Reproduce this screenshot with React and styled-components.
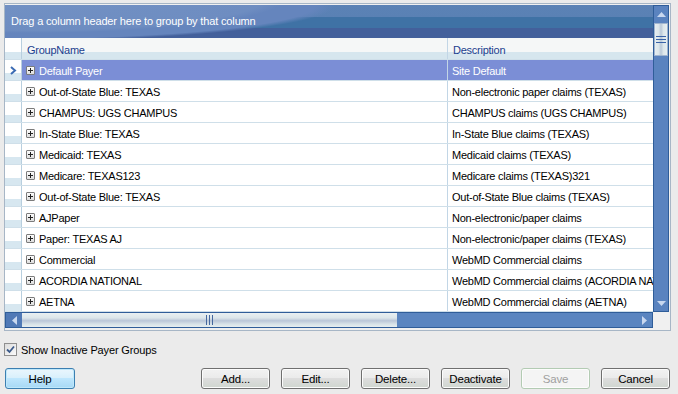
import React from 'react';
import styled, { createGlobalStyle } from 'styled-components';

const GlobalStyle = createGlobalStyle`
  html, body {
    margin: 0;
    padding: 0;
    background: #ebebeb;
  }
  body {
    font-family: "Liberation Sans", Arial, sans-serif;
    font-size: 11px;
  }
`;

const payers = [
  ['Default Payer', 'Site Default'],
  ['Out-of-State Blue: TEXAS', 'Non-electronic paper claims (TEXAS)'],
  ['CHAMPUS: UGS CHAMPUS', 'CHAMPUS claims (UGS CHAMPUS)'],
  ['In-State Blue: TEXAS', 'In-State Blue claims (TEXAS)'],
  ['Medicaid: TEXAS', 'Medicaid claims (TEXAS)'],
  ['Medicare: TEXAS123', 'Medicare claims (TEXAS)321'],
  ['Out-of-State Blue: TEXAS', 'Out-of-State Blue claims (TEXAS)'],
  ['AJPaper', 'Non-electronic/paper claims'],
  ['Paper: TEXAS AJ', 'Non-electronic/paper claims (TEXAS)'],
  ['Commercial', 'WebMD Commercial claims'],
  ['ACORDIA NATIONAL', 'WebMD Commercial claims (ACORDIA NATIONAL)'],
  ['AETNA', 'WebMD Commercial claims (AETNA)'],
];

const Page = styled.div`
  width: 678px;
  height: 394px;
  padding: 3px 7px 0 4px;
  box-sizing: border-box;
  display: flex;
  flex-direction: column;
`;

const GridBox = styled.div`
  border: 1px solid #a7b6c6;
  background: #f0f0f0;
  height: 328px;
  box-sizing: border-box;
  padding: 1px 1px 2px 0;
  display: flex;
  flex-direction: column;
`;

const Upper = styled.div`
  display: flex;
  height: 307px;
`;

const Main = styled.div`
  width: 648px;
  display: flex;
  flex-direction: column;
  background: #fff;
  overflow: hidden;
  letter-spacing: -0.25px;
`;

const GroupPanel = styled.div`
  height: 33px;
  box-sizing: border-box;
  padding: 10px 0 0 6px;
  color: #fff;
  font-size: 11px;
  letter-spacing: -0.15px;
  background:
    radial-gradient(ellipse 260px 34px at 20px -6px, #7291c4 0%, #6e8dc1 92%, rgba(110,141,193,0) 100%),
    radial-gradient(ellipse 330px 36px at 0px 0px, #6585bd 0%, #6585bd 94%, rgba(101,133,189,0) 100%),
    linear-gradient(to bottom, #5b82b5 0, #5a81b4 12px, #3f72a5 12px, #3f72a5 23px, #43609b 23px, #43609b 33px);
`;

const Row = styled.div`
  display: grid;
  grid-template-columns: 17px 426px 1fr;
  height: ${p => (p.$header ? 22 : 21)}px;
  box-sizing: border-box;
  border-bottom: 1px solid #cfdfe9;
  background: ${p => (p.$selected ? '#7b8ed6' : p.$header ? 'linear-gradient(to bottom, #f5f7f7 0, #f5f7f7 14px, #d6e6ee 14px, #d6e6ee 100%)' : '#fff')};
  color: ${p => (p.$selected ? '#fff' : p.$header ? '#1c3e8e' : '#000')};
`;

const Selector = styled.div`
  border-right: 1px solid #b8cfdf;
  background: linear-gradient(to bottom, #fff 0, #fff 66%, #d7e7f0 66%, #d7e7f0 100%);
  display: flex;
  align-items: center;
  justify-content: center;
  padding-top: 1px;
`;

const Cell = styled.div`
  display: flex;
  align-items: center;
  gap: 4px;
  padding-left: ${p => p.$pad ?? 4}px;
  padding-top: 2px;
  white-space: nowrap;
  overflow: hidden;
  border-right: ${p => (p.$divider ? '1px solid #c2d6e6' : 'none')};
`;

const Expander = styled.span`
  width: 9px;
  height: 9px;
  margin-top: -1px;
  box-sizing: border-box;
  border: 1px solid #7c7c7c;
  border-radius: 1px;
  background: linear-gradient(to bottom, #fcfcfc, #dedede);
  position: relative;
  flex-shrink: 0;
  &::before, &::after {
    content: '';
    position: absolute;
    background: #222;
  }
  &::before { left: 1px; top: 3px; width: 5px; height: 1px; }
  &::after { left: 3px; top: 1px; width: 1px; height: 5px; }
`;

const VScroll = styled.div`
  width: 16px;
  box-sizing: border-box;
  border: 1px solid #2f5d99;
  background: #5a83bf;
  display: flex;
  flex-direction: column;
  align-items: center;
`;

const HScrollRow = styled.div`
  display: flex;
  height: 16px;
`;

const HScroll = styled.div`
  width: 648px;
  box-sizing: border-box;
  border: 1px solid #2f5d99;
  background: #5a85c0;
  display: flex;
  align-items: center;
`;

const ArrowBtn = styled.div`
  width: ${p => (p.$vertical ? '14px' : '16px')};
  height: ${p => (p.$vertical ? '16px' : '14px')};
  display: flex;
  align-items: center;
  justify-content: center;
  background: ${p => (p.$filled ? '#5079b6' : 'transparent')};
  flex-shrink: 0;
`;

const Spacer = styled.div`
  flex: 1;
`;

const VThumb = styled.div`
  width: 14px;
  height: 33px;
  margin-top: 1px;
  box-sizing: border-box;
  border: 1px solid #9fb4cf;
  background: linear-gradient(to right, #e6eef1 0, #dce6ea 30%, #b9c8d8 50%, #dce6ea 70%, #e6eef1 100%);
  display: flex;
  align-items: center;
  justify-content: center;
`;

const HThumb = styled.div`
  width: 375px;
  height: 14px;
  box-sizing: border-box;
  background: linear-gradient(to bottom, #e9f0f2 0, #dce6ea 35%, #bac6d8 55%, #d8e3e8 80%, #e6edf0 100%);
  display: flex;
  align-items: center;
  justify-content: center;
  margin-right: auto;
`;

const Corner = styled.div`
  width: 16px;
  background: #f0f0f0;
`;

const CheckRow = styled.label`
  display: flex;
  align-items: center;
  gap: 4px;
  margin-top: 12px;
  height: 13px;
  font-size: 11px;
  letter-spacing: -0.15px;
  color: #000;
`;

const CheckBox = styled.span`
  width: 13px;
  height: 13px;
  box-sizing: border-box;
  border: 1px solid #8f8f8f;
  background: linear-gradient(135deg, #dcdcdc, #fbfbfb);
  display: flex;
  align-items: center;
  justify-content: center;
`;

const ButtonBar = styled.div`
  display: flex;
  align-items: center;
  margin-top: 12px;
  padding-left: 1px;
`;

const Button = styled.div`
  width: ${p => p.$width ?? 69}px;
  height: 21px;
  box-sizing: border-box;
  border: 1px solid ${p => (p.$primary ? '#3c7fb1' : p.$disabled ? '#b3cbb3' : '#707070')};
  border-radius: 3px;
  background: ${p => p.$primary
    ? 'linear-gradient(to bottom, #eaf6fd 0, #d9f0fc 45%, #bee6fd 50%, #a7d9f5 100%)'
    : p.$disabled
      ? '#f4f4f4'
      : 'linear-gradient(to bottom, #f2f2f2 0, #ebebeb 45%, #dddddd 50%, #cfd6cf 100%)'};
  color: ${p => (p.$disabled ? '#a0a0a0' : '#000')};
  display: flex;
  align-items: center;
  justify-content: center;
  font-size: 11.5px;
  letter-spacing: -0.2px;
  margin-left: ${p => p.$gap ?? 11}px;
  box-shadow: ${p => (p.$primary ? 'inset 0 0 0 1px #bfe8fb' : 'inset 0 0 0 1px #fcfcfc')};
`;

const Chevron = () => (
  <svg width="7" height="9" viewBox="0 0 7 9">
    <path d="M1 1 L5 4.5 L1 8" fill="none" stroke="#3c6cb4" strokeWidth="2" />
  </svg>
);

const Tri = ({ dir }) => {
  const paths = {
    up: 'M0 5 L4.5 0 L9 5 Z',
    down: 'M0 0 L9 0 L4.5 5 Z',
    left: 'M5 0 L5 9 L0 4.5 Z',
    right: 'M0 0 L5 4.5 L0 9 Z',
  };
  const horiz = dir === 'left' || dir === 'right';
  return (
    <svg width={horiz ? 5 : 9} height={horiz ? 9 : 5} viewBox={horiz ? '0 0 5 9' : '0 0 9 5'}>
      <path d={paths[dir]} fill="#c9d8ef" />
    </svg>
  );
};

const Grip = ({ vertical }) => (
  vertical ? (
    <svg width="10" height="7" viewBox="0 0 10 7">
      <path d="M0 .5 H10 M0 3.5 H10 M0 6.5 H10" stroke="#3a63a8" strokeWidth="1" />
    </svg>
  ) : (
    <svg width="7" height="10" viewBox="0 0 7 10">
      <path d="M.5 0 V10 M3.5 0 V10 M6.5 0 V10" stroke="#44679e" strokeWidth="1" />
    </svg>
  )
);

export default function App() {
  return (
    <>
      <GlobalStyle />
      <Page>
        <GridBox>
          <Upper>
            <Main>
              <GroupPanel>Drag a column header here to group by that column</GroupPanel>
              <Row $header>
                <Selector />
                <Cell $divider $pad={5}>GroupName</Cell>
                <Cell $pad={5}>Description</Cell>
              </Row>
              {payers.map(([name, desc], i) => (
                <Row key={i} $selected={i === 0}>
                  <Selector>{i === 0 && <Chevron />}</Selector>
                  <Cell $divider>
                    <Expander />
                    {name}
                  </Cell>
                  <Cell>{desc}</Cell>
                </Row>
              ))}
            </Main>
            <VScroll>
              <ArrowBtn $vertical><Tri dir="up" /></ArrowBtn>
              <VThumb><Grip vertical /></VThumb>
              <Spacer />
              <ArrowBtn $vertical><Tri dir="down" /></ArrowBtn>
            </VScroll>
          </Upper>
          <HScrollRow>
            <HScroll>
              <ArrowBtn $filled><Tri dir="left" /></ArrowBtn>
              <HThumb><Grip /></HThumb>
              <ArrowBtn><Tri dir="right" /></ArrowBtn>
            </HScroll>
            <Corner />
          </HScrollRow>
        </GridBox>
        <CheckRow>
          <CheckBox>
            <svg width="9" height="9" viewBox="0 0 9 9">
              <path d="M1 4.5 L3.5 7 L8 1.5" fill="none" stroke="#3b5a8a" strokeWidth="1.8" />
            </svg>
          </CheckBox>
          Show Inactive Payer Groups
        </CheckRow>
        <ButtonBar>
          <Button $primary $width={70} $gap={0}>Help</Button>
          <Button $gap={126}>Add...</Button>
          <Button>Edit...</Button>
          <Button>Delete...</Button>
          <Button>Deactivate</Button>
          <Button $disabled>Save</Button>
          <Button>Cancel</Button>
        </ButtonBar>
      </Page>
    </>
  );
}
